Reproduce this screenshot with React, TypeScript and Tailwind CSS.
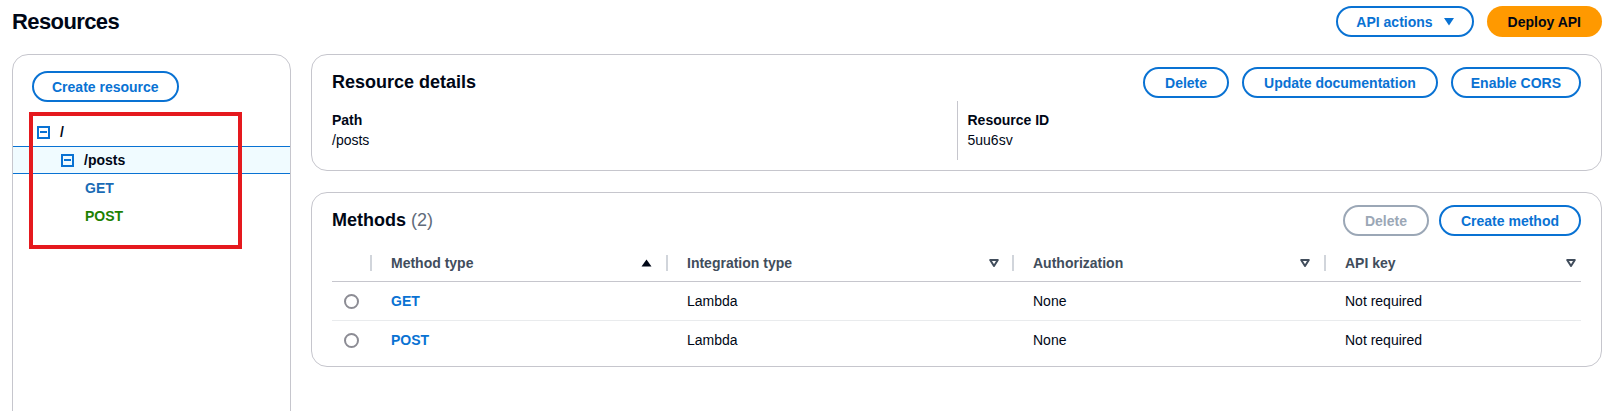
import React from "react";

const FONT = { fontFamily: "'Liberation Sans', Arial, sans-serif" };

function Btn({ children, px = "px-[20px]", className = "" }: { children: React.ReactNode; px?: string; className?: string }) {
  return (
    <button
      className={
        "h-[31px] rounded-full border-2 border-[#0972d3] bg-white text-[14px] font-bold text-[#0972d3] flex items-center leading-none " +
        px +
        " " +
        className
      }
    >
      {children}
    </button>
  );
}

function MinusBox() {
  return (
    <span className="w-[13px] h-[13px] border-2 border-[#0972d3] flex items-center justify-center">
      <span className="w-[7px] h-[2px] bg-[#0972d3]" />
    </span>
  );
}

function SortUp() {
  return (
    <svg width="11" height="8" viewBox="0 0 11 8">
      <path d="M5.5 0.5 L10.5 7.5 L0.5 7.5 Z" fill="#000716" />
    </svg>
  );
}

function SortNone() {
  return (
    <svg width="10" height="8" viewBox="0 0 10 8">
      <path d="M1.2 1 L8.8 1 L5 7 Z" fill="none" stroke="#414d5c" strokeWidth="2" strokeLinejoin="round" />
    </svg>
  );
}

function HeadCell({ label, icon, pr }: { label: string; icon: React.ReactNode; pr: string }) {
  return (
    <div className={"flex items-center h-full " + pr}>
      <span className="w-[2px] h-[16px] bg-[#d1d5db]" />
      <span className="flex-1 pl-[19px] text-[14px] font-bold text-[#414d5c]">{label}</span>
      {icon}
    </div>
  );
}

function Row({ method, last }: { method: string; last?: boolean }) {
  return (
    <div
      className={
        "grid grid-cols-[38px_296px_346px_312px_255px] h-[39px] items-center text-[14px] text-[#000716] " +
        (last ? "" : "border-b border-[#e9ebed]")
      }
    >
      <div className="flex justify-center">
        <span className="w-[15px] h-[15px] rounded-full border-2 border-[#8c8c94]" />
      </div>
      <div className="pl-[21px] font-bold text-[#0972d3]">{method}</div>
      <div className="pl-[21px]">Lambda</div>
      <div className="pl-[21px]">None</div>
      <div className="pl-[21px]">Not required</div>
    </div>
  );
}

export default function App() {
  return (
    <div className="w-[1607px] h-[411px] overflow-hidden bg-white pl-[12px] pr-[5px]" style={FONT}>
      {/* page header */}
      <div className="flex items-center justify-between pt-[6px] h-[37px]">
        <h1 className="text-[22px] font-bold tracking-[-0.6px] text-[#000716] leading-none">Resources</h1>
        <div className="flex gap-[13px]">
          <Btn px="px-[18px]" className="gap-[11px]">
            API actions
            <svg width="10" height="8" viewBox="0 0 10 8">
              <path d="M0 0 L10 0 L5 7.5 Z" fill="#0972d3" />
            </svg>
          </Btn>
          <button className="h-[31px] rounded-full bg-[#ff9900] px-[21px] text-[14px] font-bold text-[#000716] leading-none">
            Deploy API
          </button>
        </div>
      </div>

      <div className="flex gap-[20px] mt-[17px]">
        {/* resource tree */}
        <div className="relative w-[279px] h-[400px] shrink-0 rounded-[16px] border border-[#c6c6cd] pt-[16px]">
          <div className="pl-[19px]">
            <Btn px="px-[18px]">Create resource</Btn>
          </div>
          <div className="mt-[16px] text-[14px] font-bold">
            <div className="h-[28px] flex items-center pl-[24px] gap-[10px] text-[#000716]">
              <MinusBox />
              <span>/</span>
            </div>
            <div className="h-[28px] flex items-center pl-[48px] gap-[10px] text-[#000716] bg-[#f0fbff] border-y border-[#0972d3]">
              <MinusBox />
              <span>/posts</span>
            </div>
            <div className="h-[28px] flex items-center pl-[72px] text-[#1a6bb5]">GET</div>
            <div className="h-[28px] flex items-center pl-[72px] text-[#1d8102]">POST</div>
          </div>
          <div className="absolute left-[16px] top-[57px] w-[213px] h-[137px] border-[4px] border-[#e5191e]" />
        </div>

        {/* right column */}
        <div className="flex-1 flex flex-col gap-[21px]">
          <div className="rounded-[16px] border border-[#c6c6cd] px-[20px] pt-[12px] pb-[10px]">
            <div className="flex items-center justify-between">
              <h2 className="text-[18px] font-bold text-[#000716]">Resource details</h2>
              <div className="flex gap-[13px]">
                <Btn>Delete</Btn>
                <Btn>Update documentation</Btn>
                <Btn px="px-[18px]">Enable CORS</Btn>
              </div>
            </div>
            <div className="grid grid-cols-2 mt-[3px] h-[59px] text-[14px] text-[#000716]">
              <div className="pt-[9px]">
                <div className="font-bold leading-[20px]">Path</div>
                <div className="leading-[20px]">/posts</div>
              </div>
              <div className="border-l border-[#c6c6cd] pl-[10px] pt-[9px]">
                <div className="font-bold leading-[20px]">Resource ID</div>
                <div className="leading-[20px]">5uu6sv</div>
              </div>
            </div>
          </div>

          <div className="rounded-[16px] border border-[#c6c6cd] px-[20px] pt-[12px] pb-[6px]">
            <div className="flex items-center justify-between">
              <h2 className="text-[18px] font-bold text-[#000716]">
                Methods <span className="font-normal text-[#5f6b7a]">(2)</span>
              </h2>
              <div className="flex gap-[10px]">
                <button className="h-[31px] rounded-full border-2 border-[#9ba7b6] bg-white px-[20px] text-[14px] font-bold text-[#9ba7b6] leading-none">
                  Delete
                </button>
                <Btn>Create method</Btn>
              </div>
            </div>
            <div className="mt-[9px]">
              <div className="grid grid-cols-[38px_296px_346px_312px_255px] h-[37px] border-b border-[#c6c6cd]">
                <div />
                <HeadCell label="Method type" icon={<SortUp />} pr="pr-[14px]" />
                <HeadCell label="Integration type" icon={<SortNone />} pr="pr-[13px]" />
                <HeadCell label="Authorization" icon={<SortNone />} pr="pr-[14px]" />
                <HeadCell label="API key" icon={<SortNone />} pr="pr-[3px]" />
              </div>
              <Row method="GET" />
              <Row method="POST" last />
            </div>
          </div>
        </div>
      </div>
    </div>
  );
}
